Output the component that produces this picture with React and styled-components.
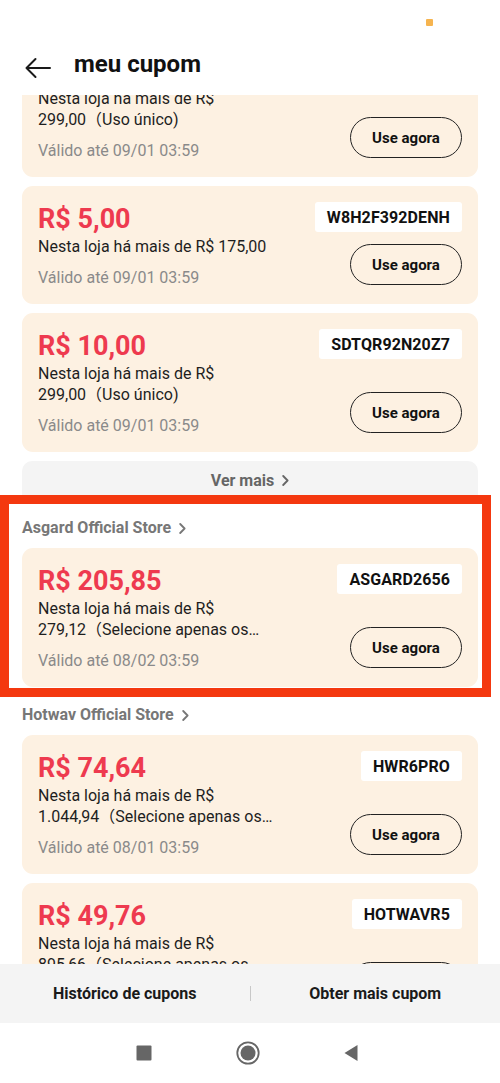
import React from "react";
import styled, { createGlobalStyle } from "styled-components";

const GlobalStyle = createGlobalStyle`
  html, body { margin: 0; padding: 0; background: #fff; }
  body { font-family: Roboto, "Noto Sans CJK SC", sans-serif; -webkit-font-smoothing: antialiased; }
  * { box-sizing: border-box; }
`;

const Screen = styled.div`
  width: 500px;
  height: 1083px;
  display: flex;
  flex-direction: column;
  background: #fff;
  overflow: hidden;
`;

const StatusBar = styled.div`
  height: 40px;
  flex: none;
  display: flex;
  justify-content: flex-end;
  padding: 19px 67px 0 0;
`;

const StatusDot = styled.span`
  width: 7px;
  height: 7px;
  background: #f6b44f;
  border-radius: 1px;
`;

const Header = styled.header`
  height: 55px;
  flex: none;
  display: flex;
  align-items: center;
  padding: 0 0 0 24px;
  gap: 23px;
`;

const BackIcon = styled.svg`
  width: 27px;
  height: 22px;
  display: block;
`;

const Title = styled.h1`
  margin: 0;
  padding-bottom: 7px;
  font-size: 24px;
  font-weight: 700;
  color: #111;
  line-height: 30px;
`;

const Scroll = styled.main`
  flex: 1;
  min-height: 0;
  overflow: hidden;
`;

const List = styled.div`
  padding: 0 22px;
  display: flex;
  flex-direction: column;
  margin-top: -57px;
`;

const Card = styled.div`
  background: #fdf1e2;
  border-radius: 11px;
  padding: 16px;
  display: flex;
  justify-content: space-between;
  gap: 12px;
  margin-bottom: ${(p) => (p.$last ? "0" : "9px")};
`;

const Info = styled.div`
  display: flex;
  flex-direction: column;
  min-width: 0;
`;

const Price = styled.div`
  font-size: 27px;
  line-height: 34px;
  font-weight: 700;
  color: #ee3a4f;
`;

const Desc = styled.div`
  font-size: 16px;
  line-height: 21px;
  color: #1e1e1e;
  white-space: nowrap;
`;

const DescLine = styled.span`
  display: block;
`;

const Valid = styled.div`
  margin-top: 10px;
  font-size: 16px;
  line-height: 21px;
  color: #8a8a8a;
`;

const Actions = styled.div`
  display: flex;
  flex-direction: column;
  justify-content: space-between;
  align-items: flex-end;
  padding-bottom: 3px;
`;

const Code = styled.div`
  height: 30px;
  padding: 0 12px;
  background: #fff;
  border-radius: 3px;
  display: flex;
  align-items: center;
  font-size: 16px;
  font-weight: 700;
  color: #111;
  letter-spacing: 0.1px;
`;

const UseButton = styled.button`
  width: 112px;
  height: 41px;
  border: 1.5px solid #222;
  border-radius: 21px;
  background: transparent;
  font-family: inherit;
  font-size: 15px;
  font-weight: 700;
  color: #111;
  padding: 0;
`;

const MoreBar = styled.div`
  height: 39px;
  background: #f4f4f4;
  border-radius: 10px 10px 0 0;
  display: flex;
  align-items: center;
  justify-content: center;
  gap: 8px;
  padding-bottom: 1px;
  font-size: 16px;
  font-weight: 700;
  color: #666;
`;

const Section = styled.section`
  position: relative;
  display: flex;
  flex-direction: column;
`;

const StoreTitle = styled.div`
  padding: 17px 0 9px;
  display: flex;
  align-items: center;
  gap: 8px;
  font-size: 16px;
  line-height: 22px;
  font-weight: 700;
  color: #777;
`;

const Highlight = styled.div`
  position: absolute;
  top: -5px;
  left: -22px;
  right: -13px;
  bottom: -10px;
  border: 9px solid #f4380f;
  pointer-events: none;
`;

const Chevron = styled.svg`
  width: 7px;
  height: 11px;
  display: block;
`;

const BottomBar = styled.nav`
  height: 59px;
  flex: none;
  background: #f4f4f4;
  display: flex;
  align-items: center;
`;

const BottomButton = styled.div`
  flex: 1;
  text-align: center;
  font-size: 16px;
  font-weight: 700;
  color: #1a1a1a;
`;

const Divider = styled.span`
  width: 1px;
  height: 15px;
  background: #c8c8c8;
`;

const NavBar = styled.div`
  height: 60px;
  flex: none;
  display: flex;
  align-items: center;
  justify-content: center;
  gap: 80px;
  padding: 0 4px 1px 0;
`;

const NavIcon = styled.svg`
  width: 24px;
  height: 24px;
  display: block;
`;

const ChevronIcon = ({ color = "#666" }) => (
  <Chevron viewBox="0 0 7 11">
    <path d="M1.2 1 L5.6 5.5 L1.2 10" fill="none" stroke={color} strokeWidth="1.8" strokeLinecap="round" strokeLinejoin="round" />
  </Chevron>
);

const coupons = {
  top: [
    {
      price: "R$ 10,00",
      code: "SDTQR92N20Z7",
      desc: ["Nesta loja há mais de R$", "299,00（Uso único)"],
      valid: "Válido até 09/01 03:59",
    },
    {
      price: "R$ 5,00",
      code: "W8H2F392DENH",
      desc: ["Nesta loja há mais de R$ 175,00"],
      valid: "Válido até 09/01 03:59",
    },
    {
      price: "R$ 10,00",
      code: "SDTQR92N20Z7",
      desc: ["Nesta loja há mais de R$", "299,00（Uso único)"],
      valid: "Válido até 09/01 03:59",
    },
  ],
  asgard: [
    {
      price: "R$ 205,85",
      code: "ASGARD2656",
      desc: ["Nesta loja há mais de R$", "279,12（Selecione apenas os…"],
      valid: "Válido até 08/02 03:59",
    },
  ],
  hotwav: [
    {
      price: "R$ 74,64",
      code: "HWR6PRO",
      desc: ["Nesta loja há mais de R$", "1.044,94（Selecione apenas os…"],
      valid: "Válido até 08/01 03:59",
    },
    {
      price: "R$ 49,76",
      code: "HOTWAVR5",
      desc: ["Nesta loja há mais de R$", "895,66（Selecione apenas os…"],
      valid: "Válido até 08/01 03:59",
    },
  ],
};

const Coupon = ({ c, last }) => (
  <Card $last={last}>
    <Info>
      <Price>{c.price}</Price>
      <Desc>
        {c.desc.map((d) => (
          <DescLine key={d}>{d}</DescLine>
        ))}
      </Desc>
      <Valid>{c.valid}</Valid>
    </Info>
    <Actions>
      <Code>{c.code}</Code>
      <UseButton>Use agora</UseButton>
    </Actions>
  </Card>
);

export default function App() {
  return (
    <>
      <GlobalStyle />
      <Screen>
        <StatusBar>
          <StatusDot />
        </StatusBar>
        <Header>
          <BackIcon viewBox="0 0 27 22">
            <path d="M26 11 H2.5 M11.5 2 L2.5 11 L11.5 20" fill="none" stroke="#1a1a1a" strokeWidth="2" strokeLinecap="round" strokeLinejoin="round" />
          </BackIcon>
          <Title>meu cupom</Title>
        </Header>
        <Scroll>
          <List>
            {coupons.top.map((c, i) => (
              <Coupon key={i} c={c} />
            ))}
            <MoreBar>
              Ver mais <ChevronIcon color="#666" />
            </MoreBar>
            <Section>
              <StoreTitle>
                Asgard Official Store <ChevronIcon color="#777" />
              </StoreTitle>
              {coupons.asgard.map((c, i) => (
                <Coupon key={i} c={c} last />
              ))}
              <Highlight />
            </Section>
            <Section>
              <StoreTitle>
                Hotwav Official Store <ChevronIcon color="#777" />
              </StoreTitle>
              {coupons.hotwav.map((c, i) => (
                <Coupon key={i} c={c} />
              ))}
            </Section>
          </List>
        </Scroll>
        <BottomBar>
          <BottomButton>Histórico de cupons</BottomButton>
          <Divider />
          <BottomButton>Obter mais cupom</BottomButton>
        </BottomBar>
        <NavBar>
          <NavIcon viewBox="0 0 24 24">
            <rect x="4.5" y="4.5" width="15" height="15" rx="1" fill="#666" />
          </NavIcon>
          <NavIcon viewBox="0 0 24 24">
            <circle cx="12" cy="12" r="10.7" fill="none" stroke="#666" strokeWidth="1.8" />
            <circle cx="12" cy="12" r="7.5" fill="#666" />
          </NavIcon>
          <NavIcon viewBox="0 0 24 24">
            <path d="M4.5 12 L17.5 4 V20 Z" fill="#666" strokeLinejoin="round" />
          </NavIcon>
        </NavBar>
      </Screen>
    </>
  );
}
